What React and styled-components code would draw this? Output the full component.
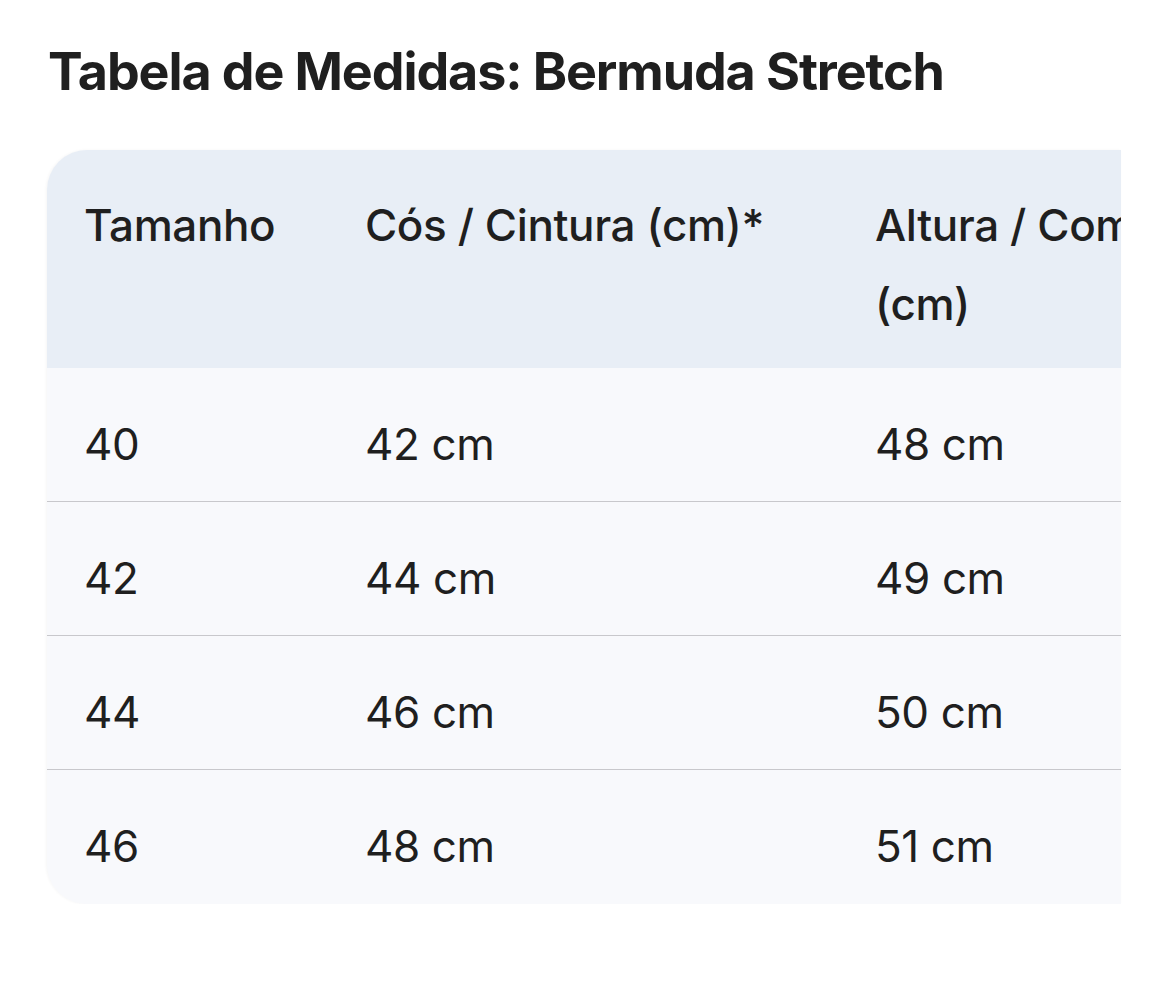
import React from "react";
import styled, { createGlobalStyle } from "styled-components";

const Global = createGlobalStyle`
  html, body { margin: 0; padding: 0; background: #ffffff; }
  body { font-family: Inter, "Noto Sans", sans-serif; color: #1f1f1f; }
`;

const Page = styled.div`
  padding: 40px 49px 0 47px;
`;

const Title = styled.h1`
  margin: 0 0 47px 1px;
  font-size: 52px;
  line-height: 63px;
  font-weight: 700;
  letter-spacing: -1.1px;
  color: #1f1f1f;
`;

const ScrollArea = styled.div`
  width: 1074px;
  overflow: hidden;
  border-radius: 40px 0 0 40px;
  background: #f8f9fc;
  box-shadow: -1px 0 3px rgba(0, 0, 0, 0.04);
`;

const Table = styled.table`
  border-collapse: collapse;
  table-layout: fixed;
  width: 1400px;
  font-size: 44px;
  line-height: 79px;
  letter-spacing: -0.4px;
  color: #1f1f1f;
`;

const Col = styled.col`
  width: ${(p) => p.$w}px;
`;

const HeadRow = styled.tr`
  background: #e8eef6;
`;

const HeadCell = styled.th`
  text-align: left;
  font-weight: 500;
  padding: 36px 37px 24px 37px;
  vertical-align: top;
`;

const Row = styled.tr`
  background: #f8f9fc;
  border-bottom: 1px solid ${(p) => (p.$last ? "transparent" : "#c8c8cc")};
`;

const Cell = styled.td`
  padding: 37px 37px 17px 37px;
  font-weight: 400;
  white-space: nowrap;
`;

const rows = [
  ["40", "42 cm", "48 cm"],
  ["42", "44 cm", "49 cm"],
  ["44", "46 cm", "50 cm"],
  ["46", "48 cm", "51 cm"],
];

export default function App() {
  return (
    <>
      <Global />
      <Page>
        <Title>Tabela de Medidas: Bermuda Stretch</Title>
        <ScrollArea>
          <Table>
            <colgroup>
              <Col $w={281} />
              <Col $w={510} />
              <Col $w={609} />
            </colgroup>
            <thead>
              <HeadRow>
                <HeadCell>Tamanho</HeadCell>
                <HeadCell>Cós / Cintura (cm)*</HeadCell>
                <HeadCell>Altura / Comprimento (cm)</HeadCell>
              </HeadRow>
            </thead>
            <tbody>
              {rows.map((r, i) => (
                <Row key={r[0]} $last={i === rows.length - 1}>
                  {r.map((c, j) => (
                    <Cell key={j}>{c}</Cell>
                  ))}
                </Row>
              ))}
            </tbody>
          </Table>
        </ScrollArea>
      </Page>
    </>
  );
}
